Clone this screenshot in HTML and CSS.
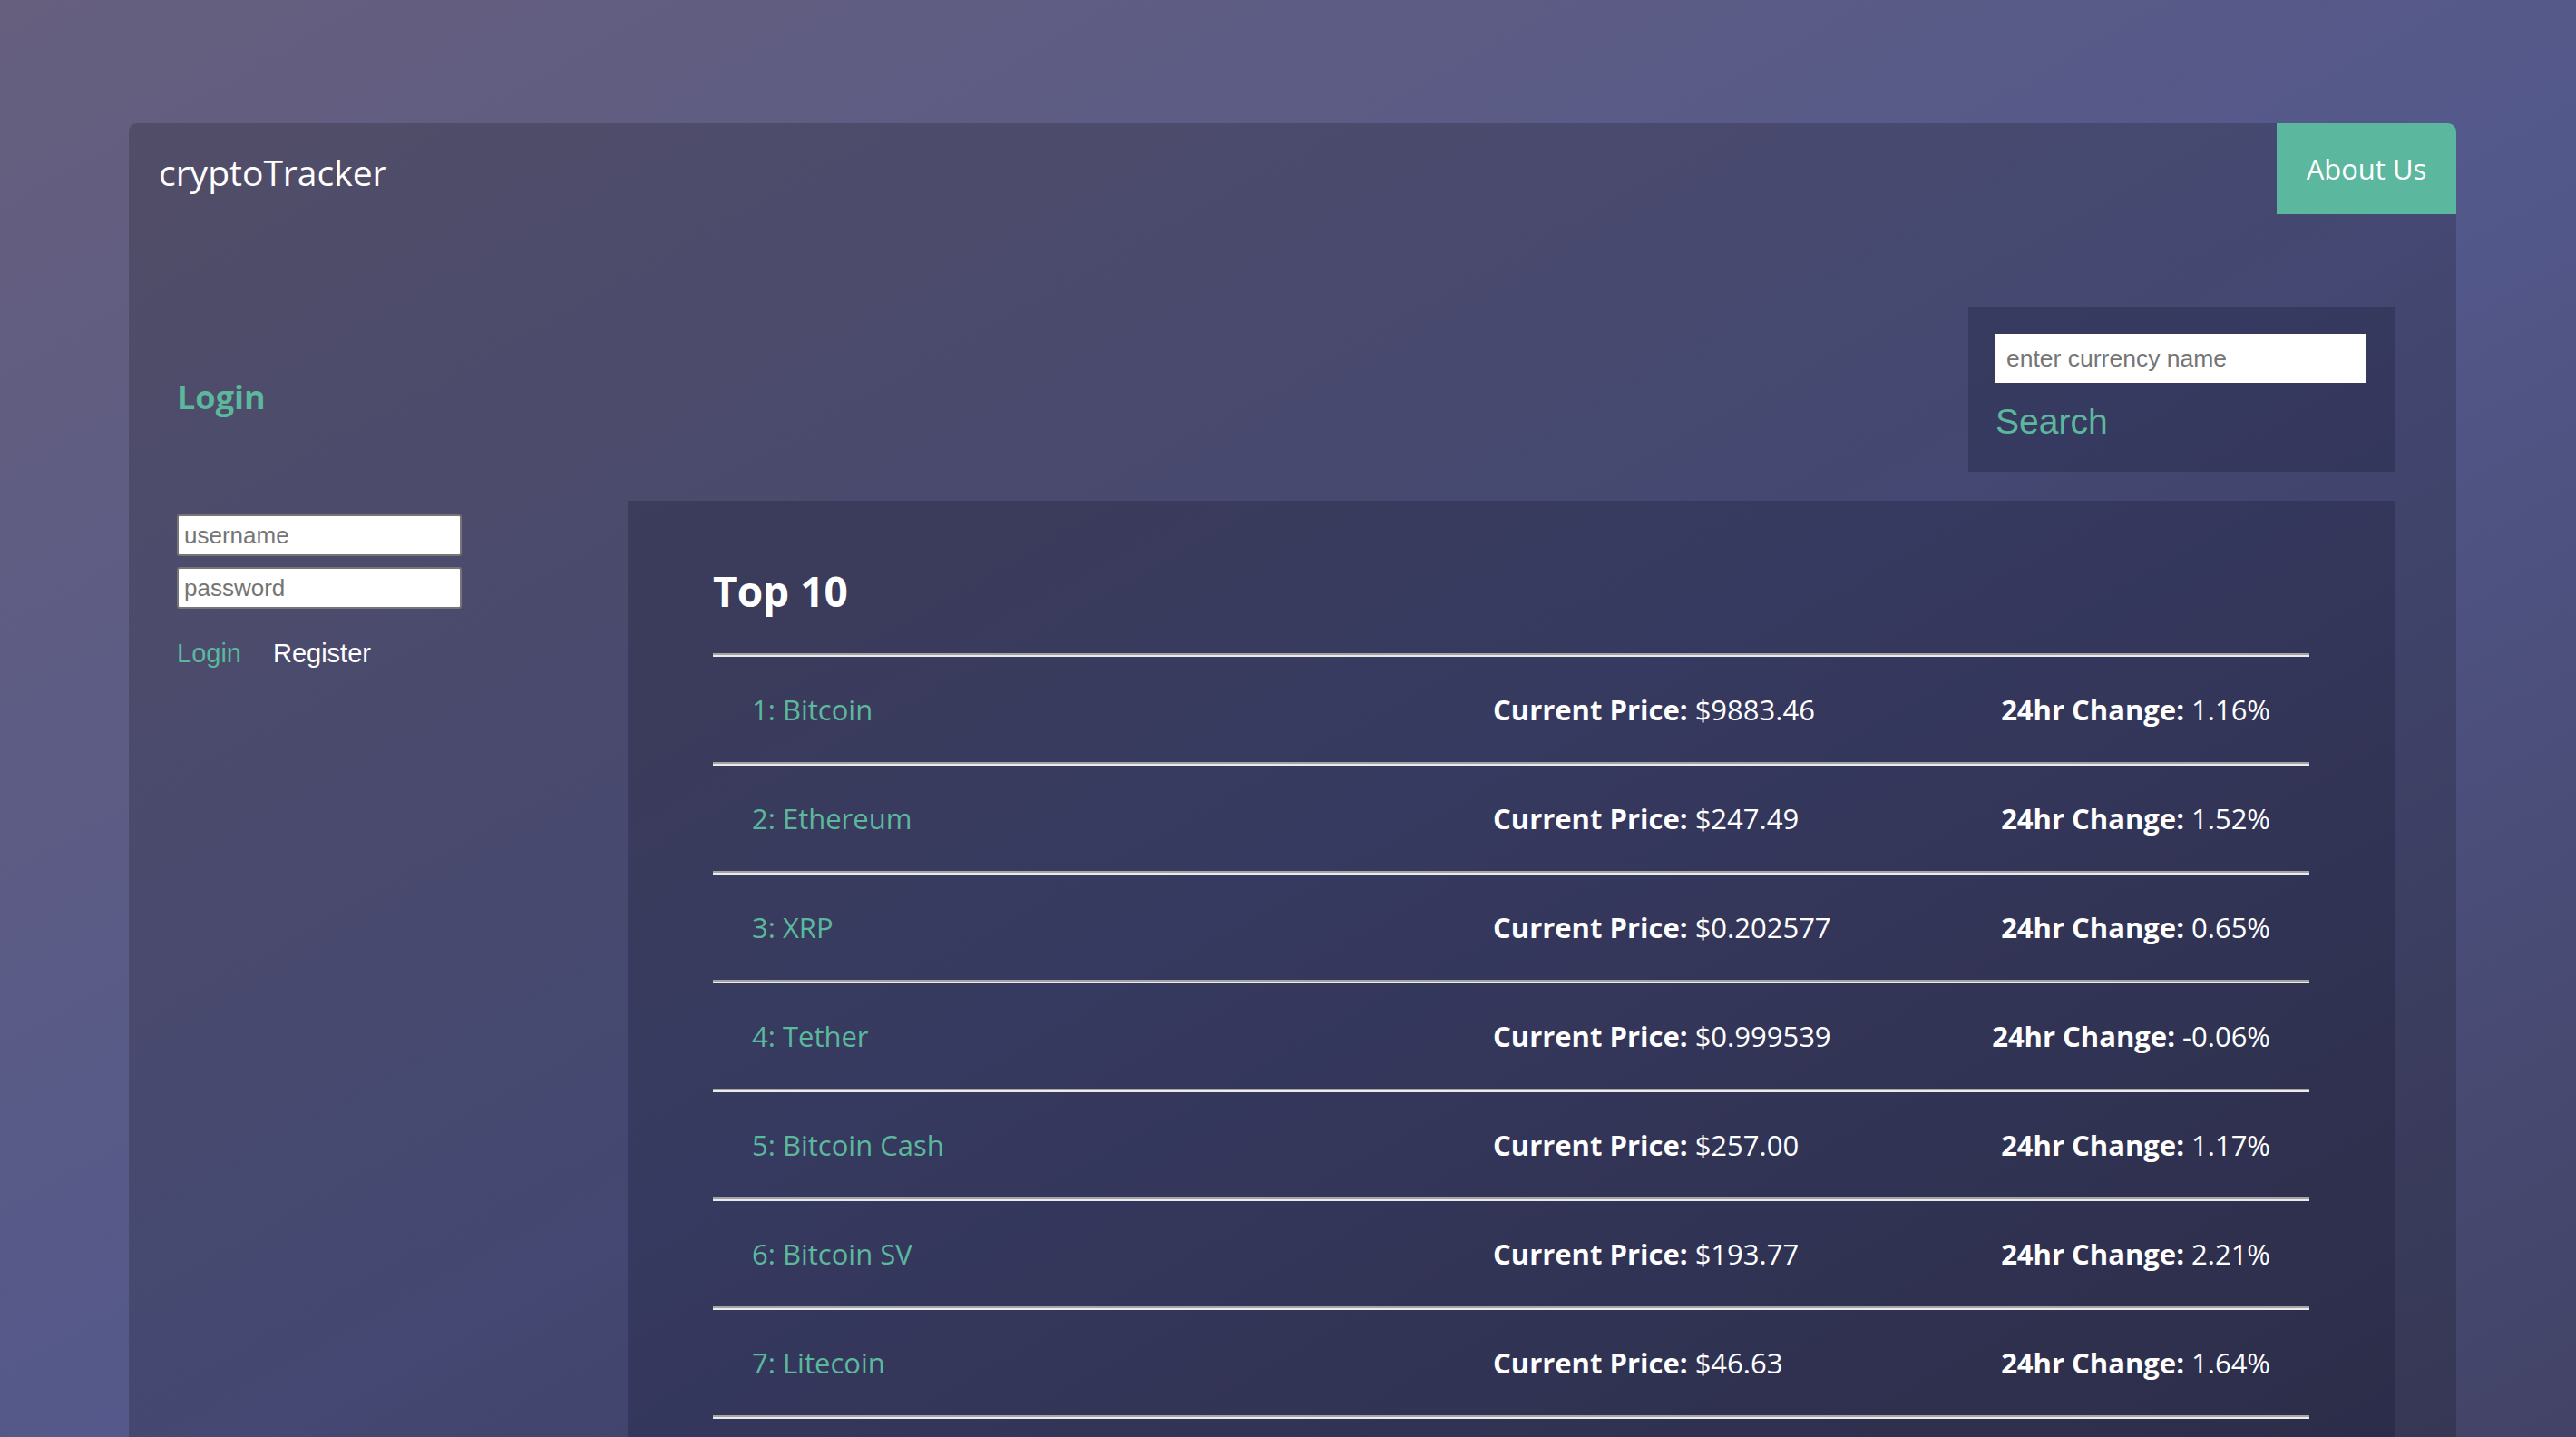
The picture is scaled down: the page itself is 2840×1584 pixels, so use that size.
FILE: index.html
```html
<!DOCTYPE html>
<html lang="en">
<head>
<meta charset="utf-8">
<title>cryptoTracker</title>
<link rel="stylesheet" href="styles.css">
</head>
<body>
<div class="card">
  <header class="topbar">
    <div class="brand">cryptoTracker</div>
    <a class="about" href="#">About Us</a>
  </header>
  <div class="main">
    <aside class="login">
      <h2 class="login-title">Login</h2>
      <form class="login-form">
        <input class="field" type="text" placeholder="username">
        <input class="field" type="password" placeholder="password">
        <div class="login-actions">
          <a class="link link-green" href="#">Login</a>
          <a class="link link-white" href="#">Register</a>
        </div>
      </form>
    </aside>
    <section class="content">
      <div class="search">
        <input class="search-input" type="text" placeholder="enter currency name">
        <button class="search-btn" type="button">Search</button>
      </div>
      <div class="panel">
        <h1 class="panel-title">Top 10</h1>
        <ul class="coins">
          <li class="coin"><span class="coin-name">1: Bitcoin</span><span class="coin-price"><b>Current Price:</b> $9883.46</span><span class="coin-change"><b>24hr Change:</b> 1.16%</span></li>
          <li class="coin"><span class="coin-name">2: Ethereum</span><span class="coin-price"><b>Current Price:</b> $247.49</span><span class="coin-change"><b>24hr Change:</b> 1.52%</span></li>
          <li class="coin"><span class="coin-name">3: XRP</span><span class="coin-price"><b>Current Price:</b> $0.202577</span><span class="coin-change"><b>24hr Change:</b> 0.65%</span></li>
          <li class="coin"><span class="coin-name">4: Tether</span><span class="coin-price"><b>Current Price:</b> $0.999539</span><span class="coin-change"><b>24hr Change:</b> -0.06%</span></li>
          <li class="coin"><span class="coin-name">5: Bitcoin Cash</span><span class="coin-price"><b>Current Price:</b> $257.00</span><span class="coin-change"><b>24hr Change:</b> 1.17%</span></li>
          <li class="coin"><span class="coin-name">6: Bitcoin SV</span><span class="coin-price"><b>Current Price:</b> $193.77</span><span class="coin-change"><b>24hr Change:</b> 2.21%</span></li>
          <li class="coin"><span class="coin-name">7: Litecoin</span><span class="coin-price"><b>Current Price:</b> $46.63</span><span class="coin-change"><b>24hr Change:</b> 1.64%</span></li>
        </ul>
      </div>
    </section>
  </div>
</div>
</body>
</html>
```

FILE: styles.css
```css
html {
  height: 100%;
  overflow: hidden;
  background: linear-gradient(to bottom right, #665f7e 0%, #5a5b86 35%, #53588b 55%, #424366 100%);
}

body {
  margin: 0;
  height: 100%;
  font-family: "Open Sans", "Noto Sans", sans-serif;
  color: #ffffff;
}

.card {
  margin: 136px 132px 0 142px;
  background: rgba(0, 0, 0, 0.18);
  border-radius: 9px 9px 0 0;
  overflow: hidden;
  padding-bottom: 60px;
}

/* header */
.topbar {
  display: flex;
  justify-content: space-between;
  align-items: flex-start;
  height: 100px;
}

.brand {
  padding: 34px 0 0 33px;
  font-size: 39px;
  line-height: 40px;
  font-weight: 400;
  color: #ffffff;
}

.about {
  display: block;
  width: 198px;
  height: 100px;
  line-height: 100px;
  text-align: center;
  font-size: 31px;
  background: #5bb79d;
  color: #ffffff;
  text-decoration: none;
}

/* main area */
.main {
  display: flex;
  padding: 0 68px 0 53px;
}

.login {
  width: 497px;
  flex: none;
}

.login-title {
  margin: 180px 0 0 0;
  font-size: 36px;
  line-height: 43px;
  font-weight: 700;
  color: #5bb89c;
}

.login-form {
  margin-top: 108px;
  display: flex;
  flex-direction: column;
  align-items: flex-start;
}

.field {
  box-sizing: border-box;
  width: 314px;
  height: 46px;
  margin: 0 0 12px 0;
  padding: 0 6px;
  border: 2px solid #767676;
  border-radius: 3px;
  background: #ffffff;
  font-family: "Liberation Sans", Arial, sans-serif;
  font-size: 26px;
  color: #222;
}

.field::placeholder,
.search-input::placeholder {
  color: #757575;
}

.login-actions {
  margin-top: 20px;
  display: flex;
  gap: 35px;
}

.link {
  font-family: "Liberation Sans", Arial, sans-serif;
  font-size: 29px;
  line-height: 34px;
  text-decoration: none;
}

.link-green { color: #5bb89c; }
.link-white { color: #ffffff; }

/* right column */
.content {
  flex: 1;
  display: flex;
  flex-direction: column;
  align-items: flex-end;
}

.search {
  margin-top: 102px;
  width: 470px;
  box-sizing: border-box;
  padding: 30px 32px 33px 30px;
  background: rgba(10, 10, 30, 0.22);
  display: flex;
  flex-direction: column;
  align-items: flex-start;
}

.search-input {
  box-sizing: border-box;
  width: 408px;
  height: 54px;
  padding: 0 12px;
  border: 0;
  background: #ffffff;
  font-family: "Liberation Sans", Arial, sans-serif;
  font-size: 26.5px;
  color: #222;
}

.search-btn {
  margin-top: 20px;
  padding: 0;
  border: 0;
  background: none;
  font-family: "Liberation Sans", Arial, sans-serif;
  font-size: 39px;
  line-height: 45px;
  color: #5bb89c;
  cursor: pointer;
}

.panel {
  margin-top: 32px;
  width: 100%;
  box-sizing: border-box;
  padding: 71px 94px 120px;
  background: rgba(10, 10, 30, 0.22);
}

.panel-title {
  margin: 0 0 41px 0;
  font-size: 46px;
  line-height: 56px;
  font-weight: 700;
  color: #ffffff;
}

.coins {
  list-style: none;
  margin: 0;
  padding: 0;
}

.coins::after {
  content: "";
  display: block;
  height: 4px;
  background: linear-gradient(#a4a4a4 50%, #ebebeb 50%);
}

.coin {
  display: grid;
  grid-template-columns: 817px 1fr auto;
  box-sizing: border-box;
  height: 120px;
  padding: 4px 43px 0;
  font-size: 31px;
  line-height: 116px;
  background:
    linear-gradient(#a4a4a4, #a4a4a4) 0 0 / 100% 2px no-repeat,
    linear-gradient(#ebebeb, #ebebeb) 0 2px / 100% 2px no-repeat;
  white-space: nowrap;
}

.coin-name {
  color: #5bb89c;
}

.coin-price,
.coin-change {
  color: #ffffff;
}

.coin-change {
  text-align: right;
}

.coin b {
  font-weight: 700;
}
```
